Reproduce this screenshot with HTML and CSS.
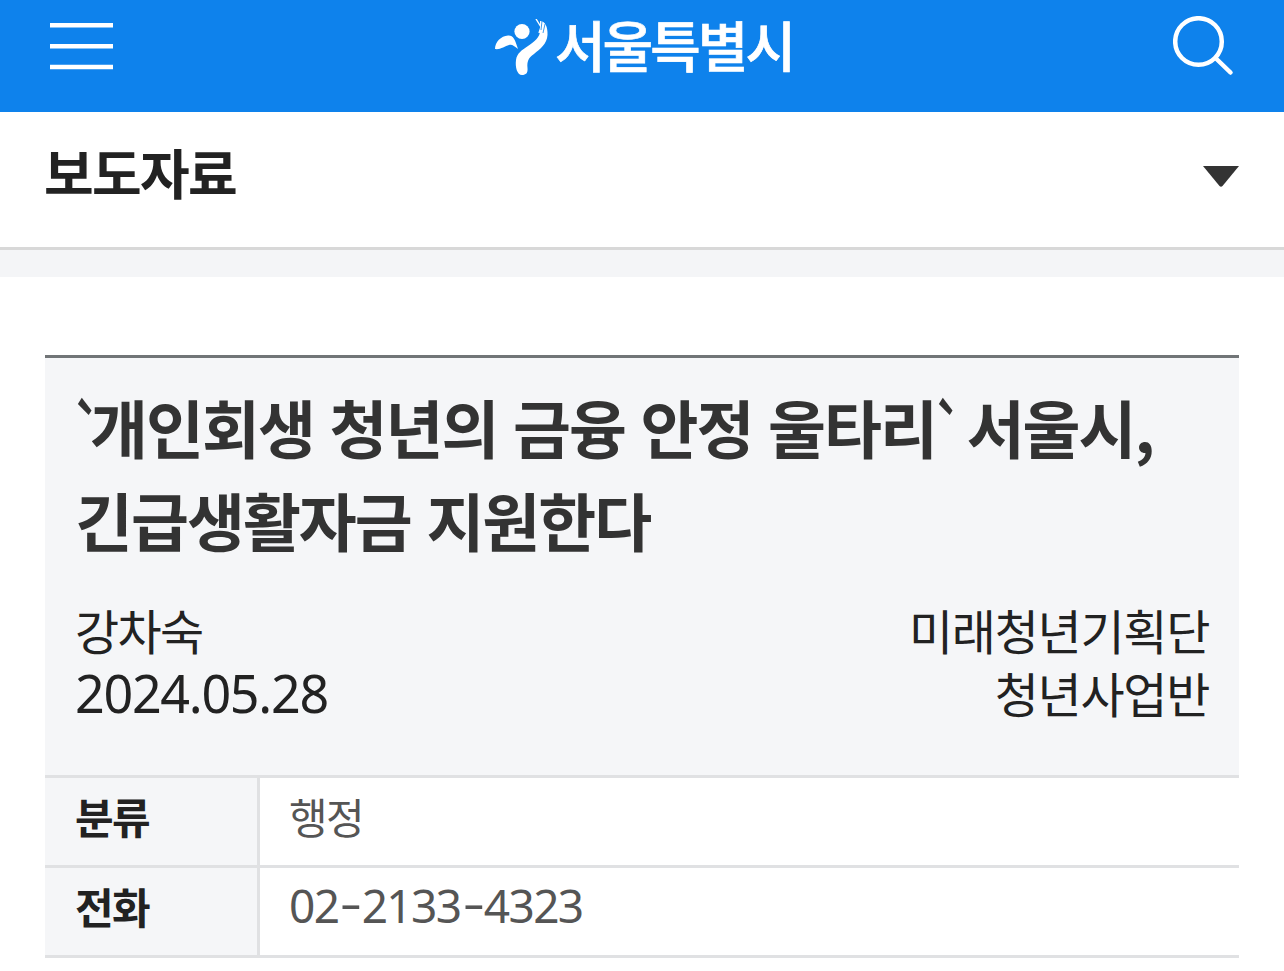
FILE: index.html
```html
<!DOCTYPE html>
<html lang="ko">
<head>
  <meta charset="UTF-8" />
  <meta name="viewport" content="width=device-width, initial-scale=1.0"/>
  <title>서울특별시 보도자료</title>
  <link rel="stylesheet" href="styles.css">
</head>
<body>

  <header class="header">
    <button class="icon-btn" aria-label="메뉴">
      <svg width="63" height="47" viewBox="0 0 63 47">
        <path d="M0 2.3h63M0 23.2h63M0 44h63" stroke="#fff" stroke-width="4.5"/>
      </svg>
    </button>
    <div class="logo">
      <svg class="logo-mark" width="54" height="57" viewBox="0 0 54 57" fill="#fff">
        <circle cx="27" cy="12.5" r="7.6"/>
        <path d="M0 30C0 23 6 17 13 16.5C18 16 20 20 23 30C19 27 17 25 14 26C10 27 5 31 0 30Z"/>
        <path d="M45 2C50 2 53 8 52.5 16C52 25 45 30 39 35C33 39 32 43 32.5 49C33 54 31 56 27 56C22 56 20 48 21 41C22 34 27 31 33 27C40 22 45 18 45 12Z"/>
        <path d="M41 0L46 8L44 14" fill="none" stroke="#fff" stroke-width="1.4"/>
        <path d="M47 2L46 11M50 5L48 14" fill="none" stroke="#0e82ec" stroke-width=".8"/>
      </svg>
      <span class="logo-text">서울특별시</span>
    </div>
    <button class="icon-btn search" aria-label="검색">
      <svg width="61" height="60" viewBox="0 0 61 60" fill="none" stroke="#fff" stroke-width="4.5">
        <circle cx="25.5" cy="25.5" r="23.3"/>
        <path d="M42.5 42L57.5 56.5" stroke-linecap="round"/>
      </svg>
    </button>
  </header>

  <nav class="page-nav">
    <h2>보도자료</h2>
    <svg class="arrow" width="36" height="21" viewBox="0 0 36 21">
      <path d="M0 0H36L19.5 20Q18 21.5 16.5 20Z" fill="#333"/>
    </svg>
  </nav>

  <main class="content">
    <div class="view-head">
      <h3><span class="tick">`</span>개인회생 청년의 금융 안정 울타리<span class="tick">`</span> 서울시,<br>긴급생활자금 지원한다</h3>
      <div class="meta">
        <div>
          <p>강차숙</p>
          <p class="num">2024.05.28</p>
        </div>
        <div class="dept">
          <p>미래청년기획단</p>
          <p>청년사업반</p>
        </div>
      </div>
    </div>
    <dl class="info">
      <dt>분류</dt>
      <dd>행정</dd>
      <dt>전화</dt>
      <dd class="num">02<span class="dash">-</span>2133<span class="dash">-</span>4323</dd>
    </dl>
  </main>

</body>
</html>
```
FILE: styles.css
```css
* {
  box-sizing: border-box;
  margin: 0;
  padding: 0;
}

body {
  font-family: "Noto Sans CJK KR", sans-serif;
  background: #fff;
  color: #222;
  overflow: hidden;
}

svg {
  display: block;
}

/* Header */
.header {
  height: 112px;
  padding: 15px 50px 0;
  background: #0e82ec;
  display: flex;
  justify-content: space-between;
  align-items: flex-start;
}

.icon-btn {
  border: none;
  background: none;
  margin-top: 8px;
}

.icon-btn.search {
  margin-top: 1px;
}

.logo {
  display: flex;
  margin: 4px 0 0 2px;
  color: #fff;
}

.logo-text {
  font-size: 55px;
  font-weight: 500;
  line-height: 57px;
  letter-spacing: -3px;
  margin: -4px 0 0 6px;
  -webkit-text-stroke: .7px #fff;
}

.page-nav {
  height: 165px;
  padding: 0 45px 45px;
  display: flex;
  justify-content: space-between;
  align-items: flex-start;
  /* divider line and grey strip under the menu */
  background: linear-gradient(#d8d8d8, #d8d8d8) 0 135px / 100% 3px no-repeat,
    linear-gradient(#f4f5f7, #f4f5f7) 0 138px / 100% 27px no-repeat;
}

.page-nav h2 {
  font-size: 54px;
  font-weight: 700;
  line-height: 80px;
  letter-spacing: -1.7px;
  margin: 20px 0 0 -1px;
}

.arrow {
  margin-top: 54px;
}

/* Article */
.content {
  padding: 78px 45px 0;
}

.view-head {
  height: 420px;
  padding: 21px 30px 0;
  border-top: 3px solid #717577;
  background: #f5f6f8;
}

.view-head h3 {
  font-size: 63px;
  font-weight: 700;
  line-height: 93px;
  letter-spacing: -2px;
  color: #333;
  white-space: nowrap;
}

.tick {
  display: inline-block;
  width: 15px;
  height: 63px;
  line-height: 63px;
  transform: translate(-1px, 3px) scaleX(.75) skewX(10deg);
}

.meta {
  display: flex;
  justify-content: space-between;
  margin-top: 33px;
  font-size: 48px;
  line-height: 63px;
  letter-spacing: -1.7px;
}

.dept {
  text-align: right;
  letter-spacing: -1.3px;
}

.num {
  font-family: "Noto Sans", sans-serif;
}

.meta .num {
  font-size: 52px;
  letter-spacing: -1.3px;
}

/* Info table */
.info {
  display: grid;
  grid-template-columns: 215px 1fr;
  border-top: 3px solid #e0e1e3;
  font-size: 42px;
  letter-spacing: -1.6px;
}

.info dt,
.info dd {
  height: 90px;
  line-height: 75px;
  padding-left: 29px;
  border-bottom: 3px solid #e0e1e3;
}

.info dt {
  padding-left: 30px;
  font-weight: 700;
  background: #f5f6f8;
  border-right: 3px solid #e0e1e3;
}

.info dd {
  color: #555;
}

.info .num {
  font-size: 46px;
}

.dash {
  display: inline-block;
  margin: 0 5px;
  transform: translateY(-4px) scaleX(1.5);
}
```
